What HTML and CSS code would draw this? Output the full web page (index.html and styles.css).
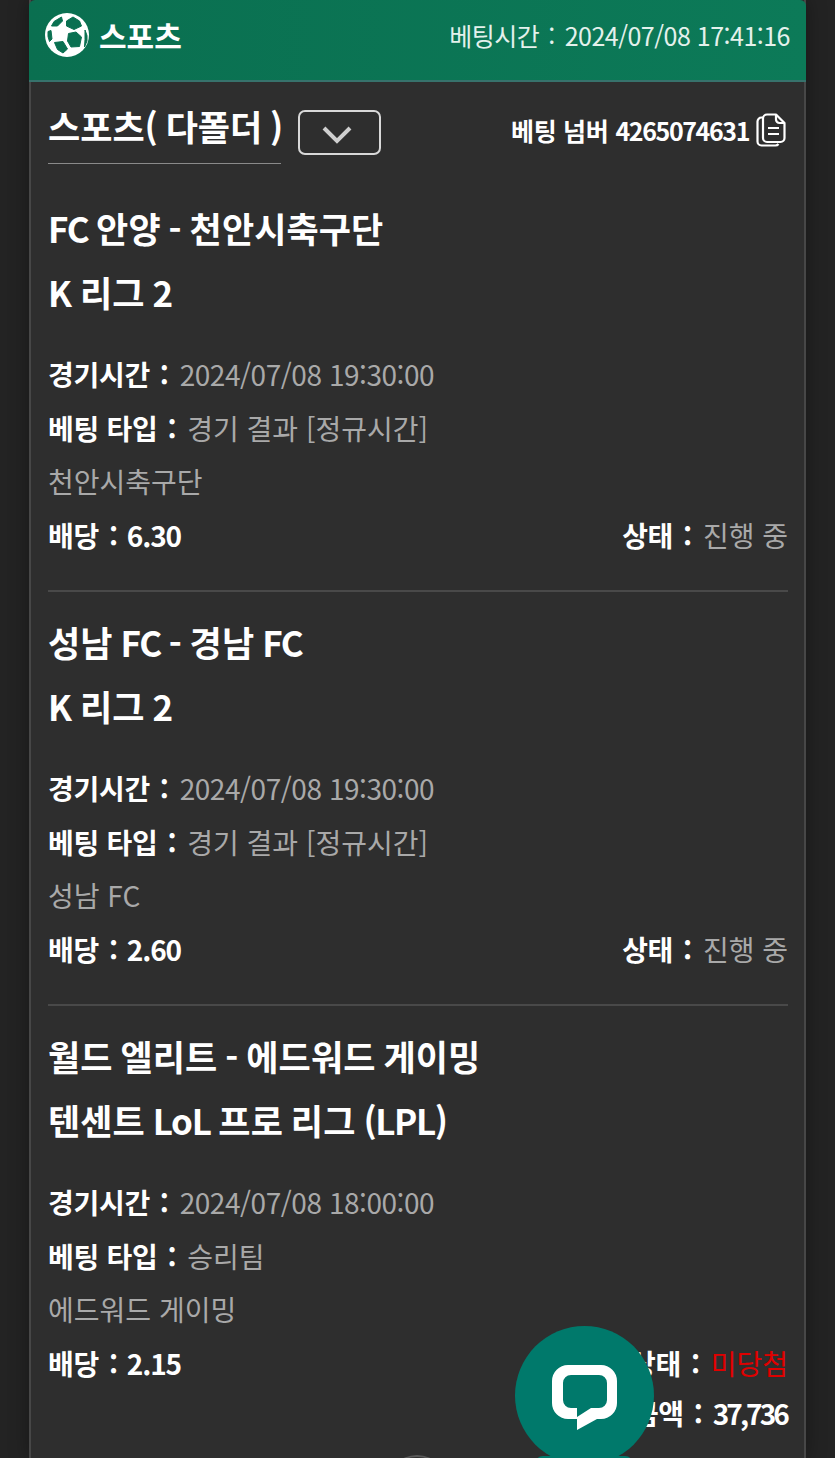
FILE: index.html
```html
<!DOCTYPE html>
<html lang="ko">
<head>
  <meta charset="UTF-8">
  <title>스포츠 베팅 내역</title>
  <link rel="stylesheet" href="styles.css">
</head>
<body>
  <div class="card">
    <div class="card-head">
      <div class="head-title">
        <svg class="ball" viewBox="0 0 44 44">
          <circle cx="22" cy="22" r="22" fill="#fff"/>
          <path fill="#0a7051" stroke="#0a7051" stroke-width="1" stroke-linejoin="round" d="M6.500 13l2.500-4.500L16.500 4l1 4-5 5zM21.500 8L28 4l6.500 4 2 5-7.500 3.500-7.500-3.500zM23.500 20.500l7.500-1.500 5.500 5-2 9.500-8.500.5-3.500-6zM9.500 29.500l8.500-1 4.500 7.500-4.500 4-5.500-3.500zM3 18.500l3-1 1 8.500-2.500 2.500-1.500-5zM40 17l2 5.500v5.500l-2.500 6 .5-7.500z"/>
        </svg>
        <span class="head-name">스포츠</span>
      </div>
      <div class="head-time">베팅시간<i class="colon">:</i>2024/07/08 17:41:16</div>
    </div>

    <div class="card-body">
      <div class="body-top">
        <div class="type-wrap">
          <div class="type-name">스포츠( 다폴더 )</div>
          <button class="toggle">
            <svg viewBox="0 0 30 18"><path d="M2 2l13 13L28 2" fill="none" stroke="#cfcfcf" stroke-width="4"/></svg>
          </button>
        </div>
        <div class="bet-no">
          베팅 넘버 <span class="num">4265074631</span>
          <svg class="copy" viewBox="0 0 30 34" fill="none" stroke="#fff" stroke-width="2.200" stroke-linejoin="round">
            <path d="M7 4.500h-1.500a4 4 0 0 0-4 4v20a4 4 0 0 0 4 4h14a4 4 0 0 0 3-1.500"/>
            <path d="M11 1.500h9l8.500 8.500v15a4 4 0 0 1-4 4h-13.500a4 4 0 0 1-4-4v-19.500a4 4 0 0 1 4-4z"/>
            <path d="M20 1.500v5a3.500 3.500 0 0 0 3.500 3.500h5M12 15h11M12 21h11"/>
          </svg>
        </div>
      </div>

      <div class="bet">
        <div class="bet-title"><span class="latin">FC</span> 안양 - 천안시축구단</div>
        <div class="bet-title">K 리그 2</div>
        <div class="rows">
          <div class="row"><b>경기시간<i class="colon">:</i></b><span class="date">2024/07/08 19:30:00</span></div>
          <div class="row"><b>베팅 타입<i class="colon">:</i></b>경기 결과 [정규시간]</div>
          <div class="row">천안시축구단</div>
          <div class="row split"><b>배당<i class="colon">:</i><span class="num">6.30</span></b><span><b>상태<i class="colon">:</i></b>진행 중</span></div>
        </div>
      </div>

      <div class="bet">
        <div class="bet-title">성남 <span class="latin">FC</span> - 경남 <span class="latin">FC</span></div>
        <div class="bet-title">K 리그 2</div>
        <div class="rows">
          <div class="row"><b>경기시간<i class="colon">:</i></b><span class="date">2024/07/08 19:30:00</span></div>
          <div class="row"><b>베팅 타입<i class="colon">:</i></b>경기 결과 [정규시간]</div>
          <div class="row">성남 FC</div>
          <div class="row split"><b>배당<i class="colon">:</i><span class="num">2.60</span></b><span><b>상태<i class="colon">:</i></b>진행 중</span></div>
        </div>
      </div>

      <div class="bet last">
        <div class="bet-title">월드 엘리트 - 에드워드 게이밍</div>
        <div class="bet-title">텐센트 <span class="latin">LoL</span> 프로 리그 <span class="latin">(LPL)</span></div>
        <div class="rows">
          <div class="row"><b>경기시간<i class="colon">:</i></b><span class="date">2024/07/08 18:00:00</span></div>
          <div class="row"><b>베팅 타입<i class="colon">:</i></b>승리팀</div>
          <div class="row">에드워드 게이밍</div>
          <div class="row split"><b>배당<i class="colon">:</i><span class="num">2.15</span></b><span><b>상태<i class="colon">:</i></b><em class="lost">미당첨</em></span></div>
          <div class="row total"><b>베팅 금액<i class="colon">:</i><span class="num">37,736</span></b></div>
        </div>
      </div>
    </div>
  </div>

  <div class="peek-arc"></div>
  <div class="peek-tab"></div>
  <div class="chat">
    <svg viewBox="0 0 65 65">
      <path fill="#fff" fill-rule="evenodd" d="M16 0h33a16 16 0 0 1 16 16v22a16 16 0 0 1-16 16H45L25 65V54h-9A16 16 0 0 1 0 38V16A16 16 0 0 1 16 0zM19 10a8 8 0 0 0-8 8v17a8 8 0 0 0 8 8h6v9l14-9h8a8 8 0 0 0 8-8V18a8 8 0 0 0-8-8z"/>
    </svg>
  </div>
</body>
</html>
```

FILE: styles.css
```css
html, body { height: 100%; }
body {
  margin: 0;
  background: #232323;
  color: #fff;
  font-family: "Noto Sans CJK KR", "Noto Sans", sans-serif;
  overflow: hidden;
}
.card {
  width: 777px;
  height: 100%;
  margin-left: 29px;
  background: #2e2e2e;
  border-left: 2px solid #474747;
  border-right: 2px solid #474747;
  box-sizing: border-box;
  box-shadow: 0 0 18px rgba(0, 0, 0, 0.35);
}
.card-head {
  height: 82px;
  margin: 0 -2px;
  box-sizing: border-box;
  padding: 0 16px 10px 16px;
  display: flex;
  justify-content: space-between;
  align-items: center;
  background: linear-gradient(90deg, #0a6f50, #0c7a58);
  border-bottom: 2px solid #37726c;
  border-radius: 6px 6px 0 0;
}
.head-title { display: flex; align-items: center; gap: 10px; }
.ball { width: 44px; height: 44px; }
.head-name { font-size: 30px; font-weight: 700; }
.head-time { font-size: 25px; color: #e4f1ec; letter-spacing: -0.5px; }
.colon { font-style: normal; margin: 0 11px 0 10px; }
.head-time .colon { margin: 0 10px 0 9px; }

.card-body { padding: 0 16px 0 17px; }
.body-top {
  height: 83px;
  display: flex;
  justify-content: space-between;
}
.type-wrap { display: flex; align-items: flex-start; }
.type-name {
  width: 233px;
  height: 82px;
  line-height: 88px;
  box-sizing: border-box;
  font-size: 35px;
  font-weight: 700;
  white-space: nowrap;
  word-spacing: -2px;
  border-bottom: 1px solid #8a8a8a;
}
.toggle {
  width: 83px;
  height: 45px;
  margin: 28px 0 0 17px;
  padding: 0;
  background: transparent;
  border: 2px solid #d8d8d8;
  border-radius: 7px;
}
.toggle svg { width: 30px; height: 18px; display: block; margin: 5px 0 0 22px; }
.bet-no {
  display: flex;
  align-items: center;
  gap: 7px;
  height: 100px;
  margin: -2px 2px 0 0;
  font-size: 25px;
  font-weight: 700;
  letter-spacing: -0.3px;
}
.copy { width: 30px; height: 34px; }
.num { letter-spacing: -1.1px; margin-left: -2px; }
.bet-no .num { letter-spacing: -1.4px; margin-left: 0; }

.bet { padding-top: 31px; height: 394px; border-bottom: 2px solid #494949; }
.bet + .bet { padding-top: 18px; }
.bet.last { border-bottom: 0; height: auto; }
.bet-title {
  font-size: 35px;
  font-weight: 700;
  height: 64px;
  line-height: 64px;
  letter-spacing: 0.1px;
  word-spacing: -2px;
}
.latin { letter-spacing: -1.4px; }
.rows { margin-top: 24px; }
.row {
  height: 53.6px;
  line-height: 53.6px;
  font-size: 28px;
  color: #a9a9a9;
}
.row b { color: #fff; font-weight: 700; letter-spacing: -0.3px; }
.date { letter-spacing: -0.45px; }
.split { display: flex; justify-content: space-between; }
.lost { color: #e00000; font-style: normal; }
.total { text-align: right; margin-top: -3px; }
.total .colon { margin-right: 10px; }
.total .num { letter-spacing: -2.9px; margin-left: 0; margin-right: 1px; }

.chat {
  position: fixed;
  left: 515px;
  top: 1326px;
  width: 139px;
  height: 139px;
  border-radius: 50%;
  background: #00796b;
  display: flex;
  align-items: center;
  justify-content: center;
}
.chat svg { width: 65px; height: 65px; margin-top: 4px; }
.peek-arc {
  position: fixed;
  left: 385px;
  top: 1455px;
  width: 64px;
  height: 64px;
  border-radius: 50%;
  border-top: 2px solid #5a5a5a;
}
.peek-tab {
  position: fixed;
  left: 535px;
  top: 1456px;
  width: 98px;
  height: 10px;
  border-radius: 8px 8px 0 0;
  background: #00796b;
}
```
